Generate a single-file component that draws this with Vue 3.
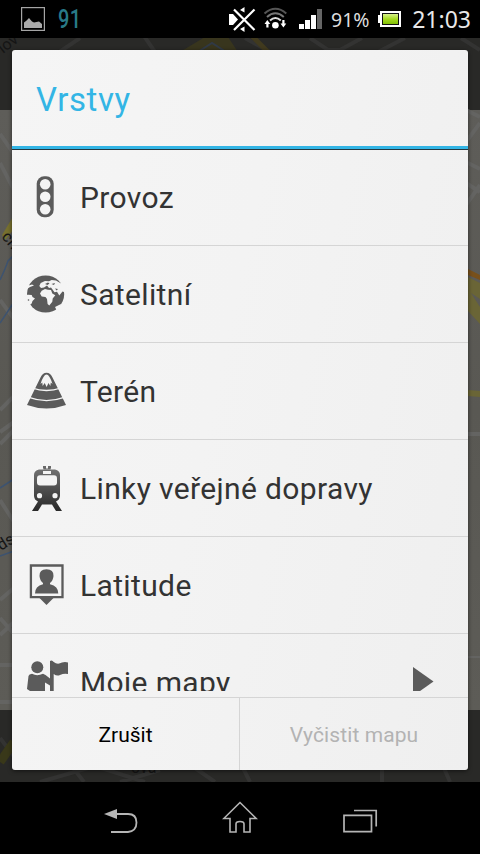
<script setup>
const layers = [
  { name: 'Provoz', icon: 'traffic' },
  { name: 'Satelitní', icon: 'globe' },
  { name: 'Terén', icon: 'terrain' },
  { name: 'Linky veřejné dopravy', icon: 'train' },
  { name: 'Latitude', icon: 'latitude' },
  { name: 'Moje mapy', icon: 'maps', more: true },
]
</script>

<template>
  <div class="phone">
    <header class="status">
      <svg class="picture" width="24" height="24" viewBox="0 0 24 24">
        <rect x=".6" y=".6" width="22.8" height="22.8" fill="#000" stroke="#a5a5a5" stroke-width="1.2" />
        <path d="M3 21V15.500L5 14L8 11L11 14.500L13 15.500L18 14.500L21 17V21Z" fill="#aaa" />
      </svg>
      <span class="count">91</span>
      <svg class="indicators" width="96" height="28" viewBox="0 0 96 28">
        <g fill="#fff">
          <path d="M0 9H4L9 14.500L4 20H0Z" />
          <path d="M11 5L15.500 2V7.500ZM11 24L15.500 21.500V27Z" />
        </g>
        <path d="M5 4.500L25.500 25M25.500 4.500L5 25" fill="none" stroke="#fff" stroke-width="2.2" />
        <g fill="none" stroke="#777" stroke-width="2">
          <path d="M35.500 8.500Q46.400 -1 57.300 8.500" stroke="#555" />
          <path d="M38 12Q46.400 4.500 54.800 12" />
          <path d="M41 15.500Q46.400 10.500 51.800 15.500" stroke="#ddd" />
        </g>
        <circle cx="46.400" cy="20.300" r="3.300" fill="#fff" />
        <path d="M35.500 19L38.300 15L41.300 19H39.500V22.500H37.300V19ZM51.500 18.500H53.300V15H55.500V18.500H57.300L54.400 22.500Z" fill="#fff" />
        <path d="M70 19h5v5h-5zM76 15h5v9h-5zM82 10h5v14h-5z" fill="#fff" />
        <path d="M88 4h5v20h-5z" fill="#656565" />
      </svg>
      <span class="percent">91%</span>
      <svg class="battery" width="24" height="18" viewBox="0 0 24 18">
        <defs>
          <linearGradient id="charge" x2="0" y2="1">
            <stop stop-color="#d8f28b" /><stop offset=".5" stop-color="#a6db22" /><stop offset="1" stop-color="#83c006" />
          </linearGradient>
        </defs>
        <path d="M0 5h2V1H23V17H2V13H0Z" fill="#fff" />
        <path d="M4 3h17v12H4z" fill="#111" />
        <path d="M5 4h15v10H5z" fill="url(#charge)" />
      </svg>
      <time class="clock">21:03</time>
    </header>

    <main class="stage">
      <svg class="map" width="480" height="744" viewBox="0 38 480 744">
        <defs>
          <linearGradient id="edge" x2="0" y2="1">
            <stop stop-color="#5e5d59" /><stop offset=".5" stop-color="#595853" /><stop offset="1" stop-color="#5d5c57" />
          </linearGradient>
        </defs>
        <rect y="38" width="480" height="744" fill="#292927" />
        <rect y="110" width="480" height="600" fill="url(#edge)" />
        <g fill="none" stroke="#333332" stroke-width="4">
          <path d="M55 55L80 38M144 36L155 52M245 38L270 52M310 38L328 50H340L362 38M378 52L405 38M461 38L480 50" />
          <path d="M0 738L18 762M40 782L95 766L145 782M74 769L84 782M120 782L160 770M195 768L215 782M243 768L250 782M382 768V782M444 768L450 782" />
        </g>
        <path d="M180 52L205 37H228L238 52Z" fill="#38351d" />
        <path d="M198 52L212 43L226 52" fill="none" stroke="#303945" stroke-width="2" />
        <path d="M252 36L268 52" stroke="#413a1e" stroke-width="5" />
        <path d="M0 762L14 742" stroke="#393819" stroke-width="9" />
        <g fill="none" stroke="#646462" stroke-width="4">
          <path d="M0 134L14 154M0 163L14 190M0 300L14 319M0 410L14 396M0 432L14 422M0 444L14 430M0 500L14 522M0 600L14 588M0 618L14 634M0 635L14 622M0 665H14M0 702H14" />
          <path d="M466 110L480 117M466 142L480 123M466 162L480 169M466 183L480 192M466 205L480 185M466 434H480" />
          <path d="M466 657H480" stroke-width="2" />
        </g>
        <path d="M2 235L14 215V229L5 240Z" fill="#77702e" />
        <path d="M0 280L5 269L8 261L14 255M0 323L14 302M0 488L14 479M0 556L14 551" fill="none" stroke="#3d5370" stroke-width="1.500" />
        <path d="M468 269L480 275V280L468 275Z" fill="#78501b" />
        <path d="M468 277L480 283V299L471 293L480 307V324L468 311Z" fill="#6a6536" />
        <path d="M468 390L480 391V397L468 396Z" fill="#6a6536" />
        <g class="street">
          <text transform="translate(3 54) rotate(-38)">lov</text>
          <text transform="translate(1 237) rotate(50)">ch</text>
          <text transform="translate(1 551) rotate(-32)">ds</text>
          <text x="131" y="773">ová</text>
        </g>
      </svg>

      <section class="dialog">
        <h1 class="title">Vrstvy</h1>
        <ul class="list">
          <li v-for="layer in layers" :key="layer.name" class="row">
            <svg class="icon" width="48" height="56" viewBox="0 0 48 56">
              <g v-if="layer.icon === 'traffic'">
                <rect x="16.700" y="6.300" width="17" height="41" rx="7.500" fill="#5b5b5b" />
                <circle cx="25.200" cy="14.200" r="5.300" fill="#f4f4f4" />
                <circle cx="25.200" cy="26.700" r="5.300" fill="#f4f4f4" />
                <circle cx="25.200" cy="39.200" r="5.300" fill="#f4f4f4" />
              </g>
              <g v-else-if="layer.icon === 'globe'">
                <circle cx="25.600" cy="28" r="18.600" fill="#5b5b5b" />
                <g fill="#f4f4f4">
                  <path d="M19.300 20L20.700 17L25 15L29 15.300L31.700 14L36 14.500L40.700 17.300L47 14V27L42.500 25.500L39.300 29.500L37 25.700L34.500 26.300L32.500 23.500L31 21.500L29 22L27 19.500L24 21.500L21 22Z" />
                  <path d="M21.700 24.700L25 23L28 23.800L31 24L32.300 27.500L35.300 29.300L32.700 32.500L32.300 35.700L29.300 39.500L27.600 38L27 33L25.500 31L21.700 30.500L20 27.500Z" />
                  <path d="M5 29L8.300 28.700L11.700 29L12.500 31L15 32.500L12.500 35L11.700 37.500L9.500 39L4 38ZM7 20L12 18.500L14 19.500L10 21L7 23Z" />
                  <path d="M35 41L41 38L40 43L37 45Z" />
                </g>
                <g fill="#5b5b5b">
                  <path d="M25 18L28 16.500L29.500 17.500L27.500 19ZM31.500 18L35 17L34 19ZM35 22.500L38 23L36.500 24.500Z" />
                  <circle cx="8.500" cy="34" r=".8" />
                </g>
              </g>
              <g v-else-if="layer.icon === 'terrain'">
                <path fill="#5b5b5b" d="M26.500 9.700Q30.500 9.700 32.500 14.500L46 42Q26.500 49 7 42L20.500 14.500Q22.500 9.700 26.500 9.700Z" />
                <path fill="none" stroke="#f4f4f4" stroke-width="1.300" d="M12 25Q26.500 30 41 25M8 34.200Q26.500 41 45 34.200" />
                <path fill="#f4f4f4" d="M20.500 21Q23.500 11.500 26.500 11.500T32.500 21L30.800 19.500L30.300 23L28.500 20L26.600 24L24.700 20L22.700 23L22.300 19.500Z" />
              </g>
              <g v-else-if="layer.icon === 'train'">
                <defs>
                  <linearGradient id="metal" x2="0" y2="1"><stop stop-color="#707070" /><stop offset="1" stop-color="#292929" /></linearGradient>
                </defs>
                <path d="M23 6h3v2.500h-3zM28 6h3v2.500h-3zM23.500 8.500h7v1h-7z" fill="#696969" />
                <path fill="url(#metal)" d="M19 9.500H35Q40 10.500 40 15V36Q39.500 40 36 41.500L42 51H36L33.500 47H20.500L18 51H12L18 41.500Q14.300 40 14 36V15Q14 10.500 19 9.500Z" />
                <rect x="17" y="15.300" width="20" height="10.300" rx="3" fill="#f4f4f4" />
                <path d="M23 11h8v3h-8z" fill="#f4f4f4" />
                <circle cx="19.500" cy="35.700" r="2.600" fill="#f4f4f4" /><circle cx="35" cy="35.700" r="2.600" fill="#f4f4f4" />
                <path d="M20.500 47L22 44.500H32L33.500 47Z" fill="#f4f4f4" />
              </g>
              <g v-else-if="layer.icon === 'latitude'">
                <path d="M10.900 8.500H42.500V40.200H10.900Z" fill="#f4f4f4" stroke="#5b5b5b" stroke-width="2.300" />
                <path d="M19.500 41H33.500L26.500 48Z" fill="#5b5b5b" />
                <path fill="#5b5b5b" d="M26.500 12.200Q33.800 12.200 33.500 19Q33 24 30 26V27.200Q38.300 29 38.300 36.500H15Q15 29 23 27.200V26Q20 24 19.500 19Q19.200 12.200 26.500 12.200Z" />
              </g>
              <g v-else fill="#5b5b5b">
                <circle cx="17.300" cy="13.300" r="6" />
                <path d="M7 35L8.500 22Q9 20 12 19.800Q17 22.500 23 19.800L25.500 21L30 24.500V7Q32 5.500 33.700 8Q37.500 11 42 8.500Q45 7.500 48 8.500V20Q44 19 40 21Q37 22.500 33.700 20V46H30V31.500L25 28.500V46H10V37Z" />
              </g>
            </svg>
            <span class="label">{{ layer.name }}</span>
            <svg v-if="layer.more" class="arrow" width="21" height="29" viewBox="0 0 21 29"><path d="M0 0L20.500 14.500L0 29Z" fill="#5b5b5b" /></svg>
          </li>
        </ul>
        <footer class="actions">
          <button class="action">Zrušit</button>
          <button class="action muted" disabled>Vyčistit mapu</button>
        </footer>
      </section>
    </main>

    <nav class="nav">
      <svg width="36" height="36" viewBox="0 0 36 36">
        <path d="M2 14L15 9V19Z" fill="#b5b5b5" />
        <path d="M14 14H26Q34.500 14 34.500 22.500T26 32H9" fill="none" stroke="#b5b5b5" stroke-width="1.800" />
      </svg>
      <svg width="36" height="36" viewBox="0 0 36 36">
        <path d="M18 2.500L1.800 18.500H8V32H14V24Q14 21.500 18 21.500T22 24V32H28V18.500H34.200Z" fill="none" stroke="#b5b5b5" stroke-width="1.600" />
      </svg>
      <svg width="36" height="36" viewBox="0 0 36 36">
        <path d="M2 15.300H29.500V31.700H2ZM12 10.500H34.200V26.500" fill="none" stroke="#b5b5b5" stroke-width="1.700" />
      </svg>
    </nav>
  </div>
</template>

<style>
body { margin: 0; background: #000; }
</style>

<style scoped>
.phone { width: 480px; height: 854px; display: flex; flex-direction: column; overflow: hidden; background: #000; font-family: Roboto, sans-serif; }
.status { height: 38px; display: flex; align-items: center; padding: 0 9px 0 21px; box-sizing: border-box; color: #e8e8e8; white-space: nowrap; }
.count { width: 40px; margin-left: 13px; padding-top: 2px; color: #287a87; font-size: 25px; line-height: 38px; font-weight: 500; letter-spacing: .5px; transform: scaleX(.8); transform-origin: left; }
.indicators { margin: 0 6px 0 131px; }
.percent { width: 39px; font: 19.5px/38px "Noto Sans", sans-serif; color: #ddd; padding-top: 1px; }
.battery { margin-left: 8px; }
.clock { margin-left: auto; font: 23px/38px "Noto Sans", sans-serif; }
.stage { height: 744px; position: relative; padding: 12px; box-sizing: border-box; }
.map { position: absolute; inset: 0; }
.street { font: 16px Roboto, sans-serif; fill: #151515; }
.dialog { position: relative; height: 720px; display: flex; flex-direction: column; border-radius: 3px; overflow: hidden; background: linear-gradient(102deg, #f5f5f5, #f3f3f3 45%, #efefef); box-shadow: 0 1px 4px rgba(0, 0, 0, .55); }
.title { height: 96px; margin: 0; padding: 0 24px; border-bottom: 3px solid #33b5e5; color: #33b5e5; font-size: 33px; font-weight: 400; line-height: 100px; letter-spacing: .6px; }
.list { height: 542px; box-sizing: border-box; margin: 0; padding: 0; border-top: 1px solid #253840; list-style: none; overflow: hidden; }
.row { height: 97px; box-sizing: border-box; padding: 0 34px 0 8px; display: flex; align-items: center; border-bottom: 1px solid #d5d5d5; color: #333; }
.row:first-child { height: 96px; }
.icon { flex: none; width: 48px; height: 56px; }
.label { margin-left: 12px; padding-top: 2px; font-size: 30px; line-height: 40px; letter-spacing: .36px; white-space: nowrap; }
.row:first-child .label { padding-top: 0; }
.arrow { margin-left: auto; margin-bottom: 1px; }
.actions { height: 73px; box-sizing: border-box; margin-top: 6px; display: flex; border-top: 1px solid #d5d5d5; }
.action { width: 228px; box-sizing: border-box; padding: 2px 0 0; border: 0; border-right: 1px solid #d5d5d5; background: none; color: #000; font: 21px Roboto, sans-serif; }
.action.muted { border: 0; color: #b3b3b3; letter-spacing: .1px; }
.nav { height: 72px; display: flex; justify-content: center; align-items: center; gap: 84px; }
</style>
